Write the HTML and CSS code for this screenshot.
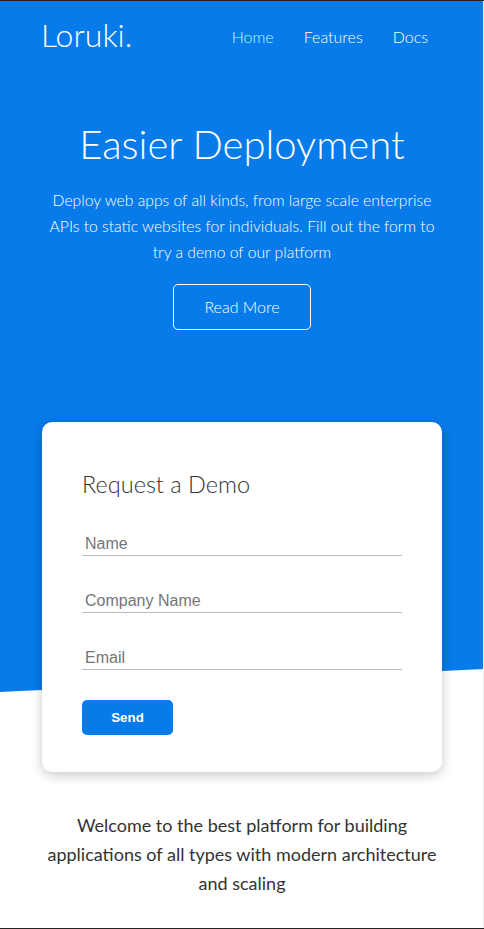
FILE: index.html
```html
<!DOCTYPE html>
<html lang="en">
<head>
<meta charset="utf-8">
<title>Loruki</title>
<link rel="stylesheet" href="styles.css">
</head>
<body>
<div class="frame-top"></div>
<div class="frame-right"></div>
<div class="frame-bottom"></div>

<section class="showcase">
  <nav class="navbar container">
    <h1 class="logo">Loruki.</h1>
    <ul class="nav-links">
      <li><a href="#" class="active">Home</a></li>
      <li><a href="#">Features</a></li>
      <li><a href="#">Docs</a></li>
    </ul>
  </nav>

  <div class="hero container">
    <h2 class="hero-title">Easier Deployment</h2>
    <p class="hero-text">Deploy web apps of all kinds, from large scale enterprise APIs to static websites for individuals. Fill out the form to try a demo of our platform</p>
    <a href="#" class="btn-outline">Read More</a>
  </div>
</section>

<section class="demo container">
  <div class="card">
    <h2 class="card-title">Request a Demo</h2>
    <form class="form">
      <input class="field" type="text" placeholder="Name">
      <input class="field" type="text" placeholder="Company Name">
      <input class="field" type="email" placeholder="Email">
      <button type="button" class="btn-send">Send</button>
    </form>
  </div>
</section>

<section class="intro container">
  <p class="intro-text">Welcome to the best platform for building applications of all types with modern architecture and scaling</p>
</section>
</body>
</html>
```

FILE: styles.css
```css
* {
  box-sizing: border-box;
  margin: 0;
  padding: 0;
}

body {
  font-family: Lato, "Open Sans", sans-serif;
  font-weight: 300;
  color: #333;
  line-height: 1.6;
  background: #fff;
  padding-top: 1px;
}

.frame-top,
.frame-bottom {
  position: fixed;
  left: 0;
  right: 0;
  height: 1px;
  background: #222;
  z-index: 10;
}
.frame-top { top: 0; }
.frame-bottom { bottom: 0; }
.frame-right {
  position: fixed;
  top: 1px;
  bottom: 1px;
  right: 0;
  width: 1px;
  background: #eef0f2;
  z-index: 10;
}

ul { list-style: none; }
a { text-decoration: none; color: inherit; }

.container {
  width: 400px;
  margin: 0 auto;
}

.showcase {
  background: #077be9;
  color: #fff;
  height: 691px;
  clip-path: polygon(0 0, 100% 0, 100% calc(100% - 23px), 0 100%);
}

.navbar {
  display: flex;
  justify-content: space-between;
  align-items: center;
  padding-top: 15px;
}

.logo {
  font-weight: 300;
  font-size: 32px;
  line-height: 1.2;
  margin-left: -1px;
}

.nav-links {
  display: flex;
  padding-top: 3px;
  margin-right: -1px;
}

.nav-links a {
  display: block;
  padding: 0 15px;
  font-size: 16px;
  line-height: 1.2;
}

.nav-links a.active {
  color: #b8fbff;
}

.hero {
  display: flex;
  flex-direction: column;
  align-items: center;
  text-align: center;
  padding-top: 66px;
}

.hero-title {
  font-weight: 300;
  font-size: 40px;
  line-height: 1.2;
  margin-bottom: 20px;
}

.hero-text {
  font-size: 15.7px;
  line-height: 25.6px;
  width: 400px;
}

.btn-outline {
  display: inline-block;
  margin-top: 19px;
  padding: 9px 30px;
  border: 1px solid #fff;
  border-radius: 5px;
  font-size: 16px;
  line-height: 1.6;
}

.demo {
  margin-top: -270px;
  position: relative;
}

.card {
  background: #fff;
  border-radius: 10px;
  box-shadow: 0 3px 12px rgba(0, 0, 0, 0.22);
  padding: 48px 40px 37px;
}

.card-title {
  font-weight: 300;
  font-size: 23.5px;
  line-height: 1.2;
  color: #333;
  margin-bottom: 33px;
}

.form {
  display: flex;
  flex-direction: column;
  align-items: flex-start;
}

.field {
  width: 320px;
  border: 0;
  border-bottom: 1px solid #b4bcc7;
  padding: 4px 3px 2px;
  font-family: "Liberation Sans", Arial, sans-serif;
  font-size: 16px;
  line-height: normal;
  color: #333;
  outline: none;
  margin-bottom: 32px;
  background: transparent;
}

.field:last-of-type {
  margin-bottom: 30px;
}

.field::placeholder {
  color: #757575;
}

.btn-send {
  width: 91px;
  height: 35px;
  border: 0;
  border-radius: 5px;
  background: #077be9;
  color: #fff;
  font-family: "Liberation Sans", Arial, sans-serif;
  font-weight: 700;
  font-size: 13.33px;
}

.intro {
  padding: 39px 0 0;
}

.intro-text {
  text-align: center;
  font-size: 18px;
  font-weight: 400;
  line-height: 29px;
  color: #333;
}
```
